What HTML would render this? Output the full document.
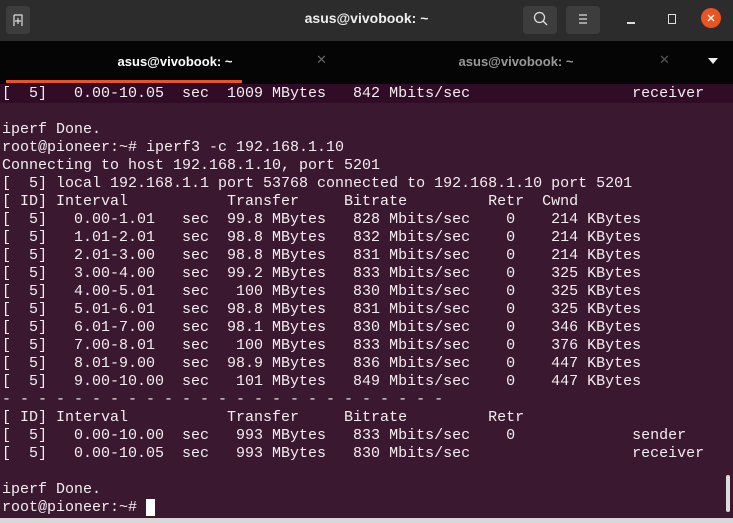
<!DOCTYPE html>
<html><head><meta charset="utf-8"><style>
html,body{margin:0;padding:0;width:733px;height:523px;overflow:hidden;background:#3a1830;font-family:"Liberation Sans",sans-serif}
.title{position:absolute;left:0;top:0;width:733px;height:41px;background:#2c2c2c}
.btn{position:absolute;top:6px;height:28px;background:#3d3d3d;border-radius:4px}
.tabs{position:absolute;left:0;top:41px;width:733px;height:43px;background:#050505}
.term{position:absolute;left:0;top:84px;width:733px;height:434px;background:#3a1830}
pre{margin:0;position:absolute;left:2px;top:85px;font-family:"Liberation Mono",monospace;font-size:15px;line-height:18px;color:#f2eef0;white-space:pre}
</style></head><body>
<div class="title">
 <div class="btn" style="left:6px;width:24px"></div>
 <svg style="position:absolute;left:10px;top:12px" width="16" height="16"><path d="M4 3h8v11M4 3v11" fill="none" stroke="#ddd" stroke-width="1.2"/><path d="M8 6v6M5 9h6" stroke="#ddd" stroke-width="1.2"/></svg>
 <div style="position:absolute;left:0;width:733px;top:10px;text-align:center;color:#eee;font-weight:bold;font-size:14px">asus@vivobook: ~</div>
 <div class="btn" style="left:523px;width:34px"></div>
 <svg style="position:absolute;left:532px;top:10px" width="18" height="18"><circle cx="7.5" cy="7.5" r="5" fill="none" stroke="#ddd" stroke-width="1.3"/><path d="M11 11l4 4" stroke="#ddd" stroke-width="1.3"/></svg>
 <div class="btn" style="left:566px;width:34px"></div>
 <svg style="position:absolute;left:575px;top:11px" width="16" height="16"><path d="M4 4h8M4 8h8M4 12h8" stroke="#ddd" stroke-width="1.2"/></svg>
 <div style="position:absolute;left:627px;top:22px;width:8px;height:1.5px;background:#ddd"></div>
 <div style="position:absolute;left:668px;top:14px;width:6px;height:8px;border:1.3px solid #ddd"></div>
 <div style="position:absolute;left:701px;top:8px;width:20px;height:20px;border-radius:50%;background:#e95420"></div>
 <svg style="position:absolute;left:706px;top:13px" width="10" height="10"><path d="M2 2l6 6M8 2l-6 6" stroke="#fff" stroke-width="1.4"/></svg>
</div>
<div class="tabs">
 <div style="position:absolute;left:0;width:350px;top:13px;text-align:center;color:#fff;font-weight:bold;font-size:13px">asus@vivobook: ~</div>
 <div style="position:absolute;left:316px;top:11px;color:#666;font-size:13px">✕</div>
 <div style="position:absolute;left:341px;width:350px;top:13px;text-align:center;color:#999;font-weight:bold;font-size:13px">asus@vivobook: ~</div>
 <div style="position:absolute;left:659px;top:11px;color:#555;font-size:13px">✕</div>
 <svg style="position:absolute;left:708px;top:17px" width="10" height="8"><path d="M0 0h10L5 6z" fill="#eee"/></svg>
 <div style="position:absolute;left:6px;top:39px;width:236px;height:3px;background:#e95420"></div>
</div>
<div class="term"></div>
<div style="position:absolute;left:0;top:84px;width:733px;height:19px;background:#300c26"></div>
<pre>[  5]   0.00-10.05  sec  1009 MBytes   842 Mbits/sec                  receiver

iperf Done.
root@pioneer:~# iperf3 -c 192.168.1.10
Connecting to host 192.168.1.10, port 5201
[  5] local 192.168.1.1 port 53768 connected to 192.168.1.10 port 5201
[ ID] Interval           Transfer     Bitrate         Retr  Cwnd
[  5]   0.00-1.01   sec  99.8 MBytes   828 Mbits/sec    0    214 KBytes
[  5]   1.01-2.01   sec  98.8 MBytes   832 Mbits/sec    0    214 KBytes
[  5]   2.01-3.00   sec  98.8 MBytes   831 Mbits/sec    0    214 KBytes
[  5]   3.00-4.00   sec  99.2 MBytes   833 Mbits/sec    0    325 KBytes
[  5]   4.00-5.01   sec   100 MBytes   830 Mbits/sec    0    325 KBytes
[  5]   5.01-6.01   sec  98.8 MBytes   831 Mbits/sec    0    325 KBytes
[  5]   6.01-7.00   sec  98.1 MBytes   830 Mbits/sec    0    346 KBytes
[  5]   7.00-8.01   sec   100 MBytes   833 Mbits/sec    0    376 KBytes
[  5]   8.01-9.00   sec  98.9 MBytes   836 Mbits/sec    0    447 KBytes
[  5]   9.00-10.00  sec   101 MBytes   849 Mbits/sec    0    447 KBytes
- - - - - - - - - - - - - - - - - - - - - - - - -
[ ID] Interval           Transfer     Bitrate         Retr
[  5]   0.00-10.00  sec   993 MBytes   833 Mbits/sec    0             sender
[  5]   0.00-10.05  sec   993 MBytes   830 Mbits/sec                  receiver

iperf Done.
root@pioneer:~# <span style="background:#fff">&nbsp;</span></pre>
<div style="position:absolute;left:726px;top:475px;width:4px;height:37px;border-radius:2px;background:#ddd"></div>
<div style="position:absolute;left:0;top:518px;width:733px;height:5px;background:#d8d8d8"></div>
</body></html>
